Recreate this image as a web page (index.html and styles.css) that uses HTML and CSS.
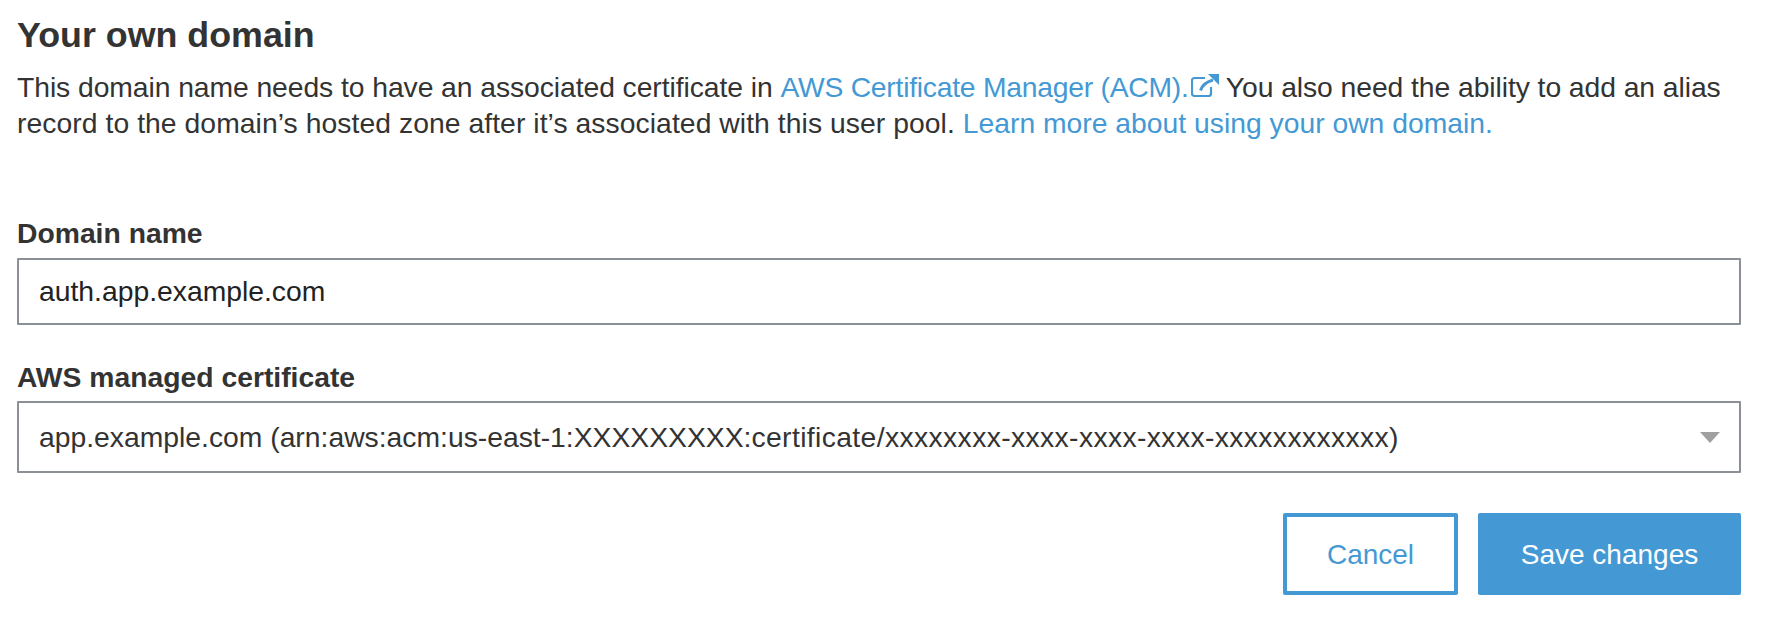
FILE: index.html
```html
<!DOCTYPE html>
<html lang="en">
<head>
<meta charset="utf-8">
<title>Your own domain</title>
<link rel="stylesheet" href="styles.css">
</head>
<body>
<main class="panel">
  <h2 class="title">Your own domain</h2>
  <p class="intro"><span class="line-one">This domain name needs to have an associated certificate in <a class="link link-acm" href="#">AWS Certificate Manager (ACM).<svg class="ext" viewBox="0 0 28 23" width="28" height="23" aria-hidden="true"><path d="M20 13V19.5a2.5 2.5 0 0 1-2.5 2.5H3.5A2.5 2.5 0 0 1 1 19.500V6.500A2.500 2.500 0 0 1 3.500 4H14" fill="none" stroke="currentColor" stroke-width="2.200"/><path d="M9.500 16.500C11 11.500 15 8 22 6" fill="none" stroke="currentColor" stroke-width="3"/><path d="M17 0h11v11z" fill="currentColor"/></svg></a> You also need the ability to add an alias</span> <span class="line-two">record to the domain’s hosted zone after it’s associated with this user pool.</span> <a class="link" href="#">Learn more about using your own domain.</a></p>
  <div class="field field-domain">
    <label class="label" for="domain">Domain name</label>
    <div class="control control-input" id="domain">auth.app.example.com</div>
  </div>
  <div class="field field-cert">
    <div class="label">AWS managed certificate</div>
    <div class="control control-select">
      <span class="cert-value">app.example.com (arn:aws:acm:us-east-1:XXXXXXXXX:<span class="cert-tail">certificate/xxxxxxxx-xxxx-xxxx-xxxx-xxxxxxxxxxxx</span>)</span>
      <span class="caret"></span>
    </div>
  </div>
  <div class="actions">
    <a class="btn btn-cancel" href="#">Cancel</a>
    <a class="btn btn-save" href="#">Save changes</a>
  </div>
</main>
</body>
</html>
```
FILE: styles.css
```css
* { box-sizing: border-box; }
html, body { margin: 0; background: #fff; }
body {
  width: 1766px;
  height: 620px;
  overflow: hidden;
  font-family: "Liberation Sans", Arial, sans-serif;
  color: #333;
}
.panel { padding: 16px 25px 0 17px; }
.title {
  margin: 0;
  font-size: 35.8px;
  line-height: 38px;
  font-weight: 700;
}
.intro {
  margin: 15px 0 0;
  font-size: 28.3px;
  line-height: 36px;
}
.line-one { letter-spacing: -0.07px; }
.line-two { letter-spacing: 0.06px; }
.link { color: #4499d4; text-decoration: none; }
.link-acm { letter-spacing: -0.25px; }
.ext { vertical-align: 0; margin-left: 2px; }
.field-domain { margin-top: 77px; }
.field-cert { margin-top: 37px; }
.label {
  display: block;
  font-size: 28.3px;
  line-height: 30px;
  font-weight: 700;
  margin-bottom: 10px;
}
.field-cert .label { margin-bottom: 9px; }
.control {
  display: flex;
  align-items: center;
  justify-content: space-between;
  width: 100%;
  padding: 0 19px 0 20px;
  border: 2px solid #8a9095;
  background: #fff;
  font-size: 28.3px;
  border-radius: 1px;
}
.control-input { height: 67px; color: #222; }
.control-select { height: 72px; }
.cert-value { font-kerning: none; }
.cert-tail { letter-spacing: 0.38px; }
.caret {
  width: 0;
  height: 0;
  border-left: 10px solid transparent;
  border-right: 10px solid transparent;
  border-top: 11px solid #a0a0a0;
}
.actions {
  display: flex;
  justify-content: flex-end;
  gap: 20px;
  margin-top: 40px;
}
.btn {
  display: flex;
  align-items: center;
  justify-content: center;
  height: 82px;
  padding-top: 2px;
  font-size: 28px;
  border-radius: 2px;
  text-decoration: none;
}
.btn-cancel { width: 175px; border: 4px solid #4499d4; color: #4499d4; background: #fff; }
.btn-save { width: 263px; background: #4499d4; color: #fff; }
```
